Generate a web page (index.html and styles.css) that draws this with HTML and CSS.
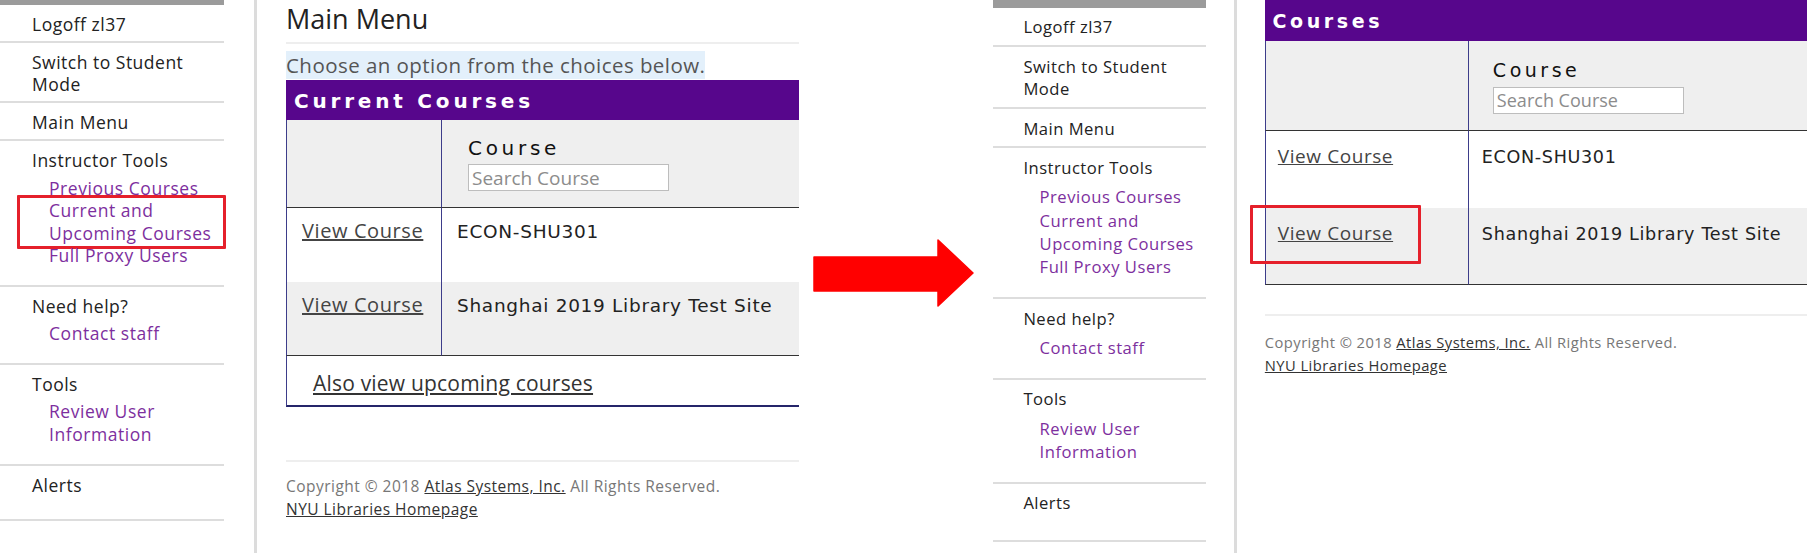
FILE: index.html
```html
<!DOCTYPE html>
<html lang="en">
<head>
<meta charset="utf-8">
<title>Current and Upcoming Courses</title>
<link rel="stylesheet" href="styles.css">
</head>
<body>
<div class="composite">

  <section class="shot shot--left">
    <aside class="sidebar">
      <nav class="side-nav">
        <div class="nav-item"><a class="nav-link" href="#">Logoff zl37</a></div>
        <div class="nav-item"><a class="nav-link" href="#">Switch to Student<br>Mode</a></div>
        <div class="nav-item"><a class="nav-link" href="#">Main Menu</a></div>
        <div class="nav-item">
          <span class="nav-head">Instructor Tools</span>
          <ul class="sub-nav">
            <li><a href="#">Previous Courses</a></li>
            <li class="is-marked"><a href="#">Current and<br>Upcoming Courses</a></li>
            <li><a href="#">Full Proxy Users</a></li>
          </ul>
        </div>
        <div class="nav-item">
          <span class="nav-head">Need help?</span>
          <ul class="sub-nav"><li><a href="#">Contact staff</a></li></ul>
        </div>
        <div class="nav-item">
          <span class="nav-head">Tools</span>
          <ul class="sub-nav"><li><a href="#">Review User<br>Information</a></li></ul>
        </div>
        <div class="nav-item">
          <span class="nav-head">Alerts</span>
          <ul class="sub-nav"></ul>
        </div>
      </nav>
    </aside>
    <div class="page">
      <main class="content">
        <h1 class="page-title">Main Menu</h1>
        <p class="intro"><span class="intro-text">Choose an option from the choices below.</span></p>
        <table class="course-table">
          <colgroup><col class="col-link"><col></colgroup>
          <thead>
            <tr><th colspan="2" class="caption-cell">Current Courses</th></tr>
            <tr class="filter-row">
              <th></th>
              <th class="filter-cell"><div class="col-label">Course</div><input class="search-input" type="text" placeholder="Search Course"></th>
            </tr>
          </thead>
          <tbody>
            <tr class="course-row">
              <td class="link-cell"><a href="#">View Course</a></td>
              <td class="name-cell">ECON-SHU301</td>
            </tr>
            <tr class="course-row course-row--alt">
              <td class="link-cell"><a href="#">View Course</a></td>
              <td class="name-cell">Shanghai 2019 Library Test Site</td>
            </tr>
          </tbody>
          <tfoot>
            <tr class="more-row"><td colspan="2"><a class="more-link" href="#">Also view upcoming courses</a></td></tr>
          </tfoot>
        </table>
      </main>
      <footer class="site-footer">
        <p>Copyright © 2018 <a href="#">Atlas Systems, Inc.</a> All Rights Reserved.</p>
        <p><a href="#">NYU Libraries Homepage</a></p>
      </footer>
    </div>
  </section>

  <div class="arrow-col">
    <svg class="arrow" viewBox="0 0 162 68" aria-hidden="true">
      <path d="M2 18 H126 V1 L161 34 L126 67 V52 H2 Z" fill="#ff0000" stroke="#ff0000" stroke-width="1.5" stroke-linejoin="round"/>
    </svg>
  </div>

  <section class="shot shot--right">
    <aside class="sidebar">
      <nav class="side-nav">
        <div class="nav-item"><a class="nav-link" href="#">Logoff zl37</a></div>
        <div class="nav-item"><a class="nav-link" href="#">Switch to Student<br>Mode</a></div>
        <div class="nav-item"><a class="nav-link" href="#">Main Menu</a></div>
        <div class="nav-item">
          <span class="nav-head">Instructor Tools</span>
          <ul class="sub-nav">
            <li><a href="#">Previous Courses</a></li>
            <li><a href="#">Current and<br>Upcoming Courses</a></li>
            <li><a href="#">Full Proxy Users</a></li>
          </ul>
        </div>
        <div class="nav-item">
          <span class="nav-head">Need help?</span>
          <ul class="sub-nav"><li><a href="#">Contact staff</a></li></ul>
        </div>
        <div class="nav-item">
          <span class="nav-head">Tools</span>
          <ul class="sub-nav"><li><a href="#">Review User<br>Information</a></li></ul>
        </div>
        <div class="nav-item">
          <span class="nav-head">Alerts</span>
          <ul class="sub-nav"></ul>
        </div>
      </nav>
    </aside>
    <div class="page">
      <main class="content">
        <table class="course-table">
          <colgroup><col class="col-link"><col></colgroup>
          <thead>
            <tr><th colspan="2" class="caption-cell">Courses</th></tr>
            <tr class="filter-row">
              <th></th>
              <th class="filter-cell"><div class="col-label">Course</div><input class="search-input" type="text" placeholder="Search Course"></th>
            </tr>
          </thead>
          <tbody>
            <tr class="course-row">
              <td class="link-cell"><a href="#">View Course</a></td>
              <td class="name-cell">ECON-SHU301</td>
            </tr>
            <tr class="course-row course-row--alt">
              <td class="link-cell is-marked"><a href="#">View Course</a></td>
              <td class="name-cell">Shanghai 2019 Library Test Site</td>
            </tr>
          </tbody>
        </table>
      </main>
      <footer class="site-footer">
        <p>Copyright © 2018 <a href="#">Atlas Systems, Inc.</a> All Rights Reserved.</p>
        <p><a href="#">NYU Libraries Homepage</a></p>
      </footer>
    </div>
  </section>

</div>
</body>
</html>
```

FILE: styles.css
```css
*,
*::before,
*::after { box-sizing: border-box; }

html, body { margin: 0; padding: 0; }

body {
  width: 1807px;
  height: 553px;
  overflow: hidden;
  background: #fff;
  font-family: "Open Sans", "Noto Sans", "Liberation Sans", sans-serif;
  color: #222;
}

.composite {
  display: flex;
  align-items: flex-start;
  height: 553px;
}

/* ---------- a screenshot panel ---------- */
.shot {
  --fx: 1;
  --fy: 1;
  --bar: 5px;
  --pad1: 15px;
  --pad2: 15px;
  --row-pad: 13px;
  --head-pad: 26px;
  --col1: 155px;
  --foot-gap: 53px;
  --foot-pad: 13px;
  flex: none;
  display: flex;
  height: 553px;
  overflow: hidden;
}
.shot--left { width: 799px; }
.shot--right {
  width: 814px;
  --fx: 0.95;
  --fy: 1.035;
  --bar: 8px;
  --pad1: 12px;
  --pad2: 13px;
  --row-pad: 15px;
  --head-pad: 24px;
  --col1: 203px;
  --foot-gap: 29px;
  --foot-pad: 15px;
}

/* ---------- sidebar ---------- */
.sidebar {
  flex: none;
  width: calc(224px * var(--fx));
  border-top: var(--bar) solid #9b9b9b;
}
.side-nav { display: flex; flex-direction: column; }
.nav-item {
  border-bottom: 2px solid #dddddd;
  padding: calc(8px * var(--fy)) 0 calc(6px * var(--fy)) calc(32px * var(--fx));
}
.nav-link,
.nav-head {
  display: block;
  font-size: calc(17.5px * var(--fx));
  letter-spacing: calc(0.5px * var(--fx));
  line-height: calc(22px * var(--fy));
  font-weight: 500;
  color: #222;
  text-decoration: none;
}
.sub-nav {
  list-style: none;
  margin: 0;
  padding: calc(5.5px * var(--fy)) 0 calc(12px * var(--fy)) calc(17px * var(--fx));
}
.sub-nav li { position: relative; }
.sub-nav a {
  display: block;
  font-size: calc(17.5px * var(--fx));
  letter-spacing: calc(0.55px * var(--fx));
  line-height: calc(22.6px * var(--fy));
  color: #7d2f9e;
  text-decoration: none;
}
.sub-nav .is-marked::after {
  content: "";
  position: absolute;
  left: -32px;
  top: -4px;
  width: 209px;
  bottom: -5px;
  border: 3px solid #e5202b;
  border-radius: 1px;
  pointer-events: none;
}

/* ---------- page column ---------- */
.page {
  flex: none;
  width: 720px;
  margin-left: calc(30px * var(--fx));
  border-left: 3px solid #dcdcdc;
  padding-left: calc(29px * var(--fx));
}

.page-title {
  margin: 0;
  padding: 2px 0 6px;
  border-bottom: 2px solid #eeeeee;
  font-size: 27px;
  line-height: 34px;
  font-weight: 500;
  color: #222;
}
.intro {
  margin: 7.5px 0 2.5px;
  font-size: 20.5px;
  letter-spacing: 0.45px;
  line-height: 26px;
  color: #555;
}
.intro-text { background: #e3f0fb; }

/* ---------- course table ---------- */
.course-table {
  border-collapse: separate;
  border-spacing: 0;
  table-layout: fixed;
  width: 620px;
  font-family: "DejaVu Sans", Verdana, sans-serif;
}
.col-link { width: var(--col1); }

.caption-cell {
  background: #57068c;
  color: #fff;
  text-align: left;
  font-weight: 700;
  font-size: calc(20px * var(--fx));
  letter-spacing: calc(3.8px * var(--fx));
  line-height: calc(24px * var(--fy));
  padding: calc(9px * var(--fy)) 0 calc(7px * var(--fy)) calc(7px * var(--fx));
  border-left: 1px solid #57068c;
}

.filter-row th {
  background: #efefef;
  vertical-align: top;
  text-align: left;
  font-weight: 400;
  border-left: 1px solid #3d3d8a;
  border-bottom: 1px solid #333;
}
.filter-row .filter-cell {
  padding: calc(16px * var(--fy)) 0 calc(16px * var(--fy)) var(--head-pad);
}
.col-label {
  font-size: calc(20px * var(--fx));
  letter-spacing: calc(3.7px * var(--fx));
  line-height: calc(24px * var(--fy));
  color: #111;
}
.search-input {
  display: block;
  margin: calc(4px * var(--fy)) 0 0;
  width: calc(201px * var(--fx));
  height: 27px;
  padding: 0 3px;
  border: 1px solid #bdbdbd;
  background: #fff;
  font-family: "Open Sans", "Noto Sans", sans-serif;
  font-size: calc(19px * var(--fx));
  color: #333;
}
.search-input::placeholder { color: #8c8c8c; }

.course-row { height: calc(74px * var(--fy)); }
.course-row td {
  vertical-align: baseline;
  padding-top: var(--row-pad);
  border-left: 1px solid #3d3d8a;
}
.course-row--alt td {
  background: #efefef;
  border-bottom: 1px solid #333;
}
.link-cell { padding-left: var(--pad1); }
.link-cell a {
  font-family: "Open Sans", "Noto Sans", sans-serif;
  font-size: calc(20px * var(--fx));
  letter-spacing: calc(0.6px * var(--fx));
  line-height: 20px;
  color: #444;
  text-decoration: underline;
}
.name-cell {
  padding-left: var(--pad2);
  font-size: calc(18.5px * var(--fx));
  letter-spacing: calc(0.7px * var(--fx));
  line-height: 20px;
  color: #222;
}
.course-table .is-marked { position: relative; }
.course-table .is-marked::after {
  content: "";
  position: absolute;
  left: -16px;
  top: -3px;
  width: 171px;
  height: 59px;
  border: 3px solid #e5202b;
  border-radius: 1px;
  pointer-events: none;
}

.more-row td {
  height: 51px;
  vertical-align: top;
  padding: 14px 0 0 26px;
  border-left: 1px solid #3d3d8a;
  border-bottom: 2px solid #25256a;
}
.more-link {
  font-family: "Open Sans", "Noto Sans", sans-serif;
  font-size: 21px;
  letter-spacing: 0.2px;
  line-height: 26px;
  color: #333;
  text-decoration: underline;
}

/* ---------- footer ---------- */
.site-footer {
  margin-top: var(--foot-gap);
  border-top: 2px solid #eeeeee;
  padding-top: var(--foot-pad);
  font-size: calc(15.5px * var(--fx));
  letter-spacing: calc(0.47px * var(--fx));
  color: #777;
}
.site-footer p {
  margin: 0;
  line-height: calc(23px * var(--fy));
}
.site-footer a { color: #333; text-decoration: underline; }

/* ---------- arrow between the two screenshots ---------- */
.arrow-col {
  flex: none;
  width: 194px;
  padding: 239px 0 0 13px;
}
.arrow { display: block; width: 162px; height: 68px; }
```
